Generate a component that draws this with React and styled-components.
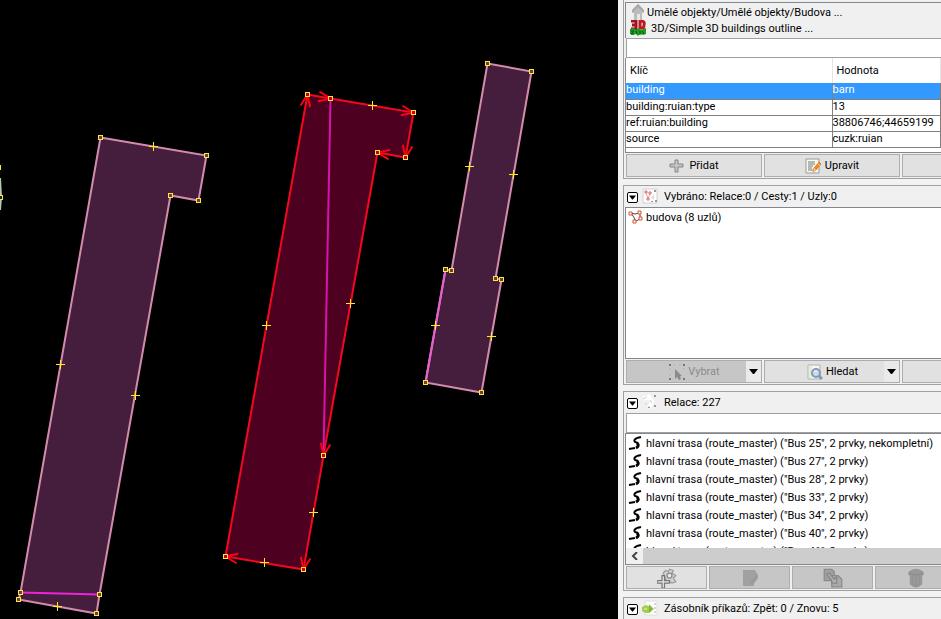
import React from "react";
import styled, { createGlobalStyle, css } from "styled-components";

const GlobalStyle = createGlobalStyle`
  * { box-sizing: border-box; }
  body { margin: 0; background: #f0f0f0; overflow: hidden; }
  body, button, input, table {
    font-family: Roboto, "Liberation Sans", sans-serif;
    font-size: 11px;
    color: #000;
  }
`;

const Page = styled.div`
  display: flex;
  height: 100vh;
  overflow: hidden;
`;

const MapArea = styled.main`
  flex: 1;
  min-width: 0;
  background: #000;
`;

const MapCanvas = styled.svg`
  display: block;
  width: 100%;
  height: 100%;
`;

const Sidebar = styled.aside`
  flex: 0 0 323px;
  display: flex;
  flex-direction: column;
  gap: 6px;
  padding-left: 5px;
  overflow: hidden;
  background: #f2f2f2;
`;

const Panel = styled.section`
  flex: none;
  padding: ${(p) => (p.$first ? "2px 0 0 2px" : "0 0 0 2px")};
  border: 1px solid #a0a0a0;
  border-width: ${(p) => (p.$first ? "0 0 1px 1px" : "1px 0 1px 1px")};
  background: #f0f0f0;
`;

const Boxed = styled.div`
  border: 1px solid #828790;
  border-right: 0;
  margin-left: -1px;
`;

const Presets = styled(Boxed)`
  height: 36px;
  padding: 1px 0 0 4px;
  border-bottom: 0;
`;

const Preset = styled.a`
  display: flex;
  align-items: center;
  gap: ${(p) => p.$gap};
  height: 16px;
  font-size: 11px;
  white-space: nowrap;
  color: #000;
  text-decoration: none;
`;

const Filter = styled.input`
  display: block;
  width: 100%;
  height: 20px;
  padding: 0 4px;
  border: 1px solid #a0a0a0;
  border-right: 0;
  border-radius: 0;
  background: #fff;
  outline: none;
`;

const TableBox = styled(Boxed)`
  height: 95px;
  border-top: 0;
  background: #fff;
  overflow: hidden;
`;

const TagTable = styled.table`
  width: 100%;
  table-layout: fixed;
  border-collapse: collapse;
`;

const KeyColumn = styled.col`
  width: 206px;
`;

const HeadCell = styled.th`
  height: 25px;
  padding: 0 4px;
  text-align: left;
  font-weight: normal;
  border-right: 1px solid #e5e5e5;
`;

const TagRow = styled.tr`
  height: 16px;
  ${(p) =>
    p.$selected &&
    css`
      background: #3399ff;
      color: #fff;
    `}
`;

const TagCell = styled.td`
  height: 16px;
  padding: 0 0 1px 0;
  line-height: 14px;
  white-space: nowrap;
  border-right: 1px solid #808080;
  border-bottom: 1px solid #808080;
`;

const ButtonBar = styled.div`
  display: flex;
  gap: 2px;
  padding: 1px 0;
  overflow: hidden;
`;

const ToolButton = styled.button`
  flex: 0 0 ${(p) => (p.$small ? "81px" : "136px")};
  display: flex;
  align-items: center;
  justify-content: center;
  gap: 4px;
  height: 23px;
  padding: 0;
  border: 1px solid #adadad;
  background: ${(p) => (p.disabled ? "#c6c6c6" : "#e1e1e1")};
  color: ${(p) => (p.disabled ? "#8b8b8b" : "#000")};
`;

const SplitButton = styled.div`
  flex: 0 0 136px;
  display: flex;
  height: 23px;
  border: 1px solid #adadad;
  background: ${(p) => (p.$off ? "#c6c6c6" : "#e1e1e1")};
`;

const SplitMain = styled.button`
  flex: 1;
  display: flex;
  align-items: center;
  justify-content: center;
  gap: 3px;
  padding: 0 0 0 16px;
  border: 0;
  background: transparent;
  color: ${(p) => (p.disabled ? "#8b8b8b" : "#000")};
`;

const SplitArrow = styled.button`
  flex: 0 0 15px;
  display: grid;
  place-items: center;
  padding: 0;
  border: 0;
  background: #eaeaea;
`;

const TitleBar = styled.header`
  display: flex;
  align-items: center;
  height: 21px;
  padding-bottom: 1px;
  background: #f0f0f0;
`;

const Collapse = styled.button`
  display: grid;
  place-items: center;
  width: 11px;
  height: 11px;
  margin: 3px 4px 0 1px;
  padding: 0;
  border: 1px solid #000;
  border-radius: 2px;
  background: #fff;
`;

const Title = styled.h2`
  margin: 0 0 0 6px;
  font-size: 11px;
  font-weight: normal;
  white-space: nowrap;
`;

const List = styled.ul`
  height: ${(p) => p.$height};
  margin: 0;
  padding: 0 0 0 2px;
  list-style: none;
  background: #fff;
  overflow: hidden;
`;

const Item = styled.li`
  display: flex;
  align-items: center;
  gap: 2px;
  height: 18px;
  white-space: nowrap;
`;

const ScrollTrack = styled.div`
  height: 16px;
  background: #cdcdcd;
`;

const ScrollButton = styled.button`
  display: grid;
  place-items: center;
  width: 17px;
  height: 16px;
  padding: 0;
  border: 0;
  background: #f0f0f0;
`;

const Icon = styled.svg.attrs({ viewBox: "0 0 16 16", "aria-hidden": true })`
  flex: none;
  display: block;
  width: ${(p) => (p.$large ? "20px" : "16px")};
  height: ${(p) => (p.$large ? "20px" : "16px")};
`;

const HouseIcon = () => (
  <Icon>
    <path d="M8 0 L3 5 V9 H4 V16 H12 V9 H13 V5 Z" fill="#bcbcbc" />
    <path d="M8 0 L2 6 V9 L8 3 L14 9 V6 Z" fill="#a8a8a8" />
    <path d="M7 10 H10 V16 H7 Z" fill="#e8e8e8" />
  </Icon>
);

const ThreeDIcon = () => (
  <Icon>
    <path d="M1 1 H6 V9 H1 M2 5 H6" fill="none" stroke="#a01420" strokeWidth="3" />
    <path d="M10 1 H12 Q15 2 14 5 Q14 8 12 8 H10 Z" fill="none" stroke="#c01820" strokeWidth="3" />
    <path d="M0 9 L4 8 L6 10 L9 8 L11 10 L16 8 V14 L13 15 L10 14 L8 16 L6 14 L3 15 L0 14 Z" fill="#1d9a25" />
    <path d="M1 11 H4 L1 14 H4 M6 11 L7 14 M10 11 V15 M12 11 L14 14" fill="none" stroke="#075f12" />
  </Icon>
);

const PlusIcon = () => (
  <Icon>
    <path d="M6 2 H9 V6 H14 V9 H9 V14 H6 V9 H1 V6 H6 Z" fill="#c4c4c4" stroke="#858585" />
  </Icon>
);

const EditIcon = () => (
  <Icon>
    <path d="M1 1 H14 V15 H1 Z" fill="#f8f8f2" stroke="#9a9a94" />
    <path d="M3 4 H10 M3 6 H10 M3 8 H8 M3 10 H7 M3 12 H9" stroke="#777" />
    <path d="M14 4 L9 10 L8 14 L11 12 L16 6 Z" fill="#f18a24" stroke="#d56a13" strokeWidth=".7" />
    <path d="M9 10 L8 14 L11 12 Z" fill="#f3d39c" />
    <path d="M12 5 L15 8" stroke="#ffc66d" />
  </Icon>
);

const SelectionIcon = () => (
  <Icon>
    <path d="M1 1 H15 V15 H1 Z" fill="#fff" stroke="#d0d0d0" />
    <path d="M4 4 L6 11 L8 5" fill="none" stroke="#e6a5a2" />
    <path d="M3 3h2v2h-2z M7 4h2v2h-2z M5 10h2v2h-2z" fill="#fff" stroke="#d66b66" />
    <path d="M12 2h2v2h-2z M13 12h2v2h-2z M9 13h2v1h-2z" fill="#999" />
    <path d="M9 10 L12 6 V12 Z" fill="#ddd" />
  </Icon>
);

const AreaIcon = () => (
  <Icon>
    <path d="M3 4 L7 10 L6 13 L12 10 V4 L7 5 Z" fill="#fff" stroke="#444" />
    <path d="M1 3h3v3h-3z M10 2h3v3h-3z M11 8h3v3h-3z M5 11h3v3h-3z" fill="#fff" stroke="#df4c2d" />
  </Icon>
);

const SelectIcon = () => (
  <Icon>
    <path d="M0 0h2v2h-2z M14 0h2v2h-2z M0 14h2v2h-2z M14 14h2v2h-2z" fill="#777" />
    <path d="M4 1 H6 M10 1 H12 M1 4 V6 M1 10 V12 M15 4 V6" stroke="#b0b0b0" />
    <path d="M6 5 V15 L8 13 L10 16 L12 15 L11 12 H13 Z" fill="#8b8b8b" />
  </Icon>
);

const SearchIcon = () => (
  <Icon>
    <path d="M1 1 H13 V15 H1 Z" fill="#f6f6f2" stroke="#aeb5aa" />
    <path d="M2 2 H5 V14 H2 Z" fill="#dcefd7" />
    <circle cx="9" cy="9" r="4" fill="#c8daef" stroke="#8799b0" strokeWidth="2" />
    <path d="M12 12 L15 15" stroke="#8799b0" strokeWidth="3" />
    <path d="M7 8 Q8 6 10 7" fill="none" stroke="#fff" />
  </Icon>
);

const RelationsIcon = () => (
  <Icon>
    <path d="M1 5 L7 3 L10 8 L7 14" fill="none" stroke="#fff" strokeWidth="4" />
    <path d="M1 5 L5 3 M8 6 L10 9 M4 9 V11 M7 12 V14" stroke="#ccc" />
    <path d="M12 1h2v2h-2z M12 11h2v2h-2z M6 13h2v1h-2z" fill="#999" />
  </Icon>
);

const RouteIcon = () => (
  <Icon>
    <path d="M13 2 L9 3" stroke="#000" strokeWidth="2" />
    <path d="M9 3 Q5 5 7 7 L10 8" fill="none" stroke="#000" strokeWidth="2" />
    <path d="M9 8 Q12 11 8 13" fill="none" stroke="#000" strokeWidth="3" />
    <path d="M7 13 L1 14" stroke="#000" strokeWidth="2" />
  </Icon>
);

const AddRelationIcon = () => (
  <Icon $large>
    <path d="M5 4 L7 2 L9 3 L10 1 L13 2 L12 4 L15 6 L13 8 L15 11 L12 12 L10 11 L8 12 Z" fill="#d2d2d2" stroke="#9a9a9a" />
    <circle cx="10" cy="6" r="2" fill="#e8e8e8" stroke="#888" />
    <path d="M4 6h2v4h4v2h-4v4h-2v-4h-4v-2h4z" fill="#e8e8e8" stroke="#777" />
  </Icon>
);

const NoteIcon = () => (
  <Icon>
    <path d="M1 0 H13 L16 5 V8 L12 14 V16 H1 Z" fill="#a0a0a0" />
    <path d="M9 13 L15 6" stroke="#999" strokeWidth="2" />
  </Icon>
);

const CopyIcon = () => (
  <Icon $large>
    <path d="M1 1 H7 L9 3 V10 H1 Z" fill="#a0a0a0" stroke="#8a8a8a" />
    <path d="M7 6 H12 L15 9 V15 H7 Z" fill="#aaa" stroke="#8a8a8a" />
    <path d="M3 5 L7 10 V12 H11 V7 L9 9 L5 4 Z" fill="#b2b2b2" stroke="#868686" />
  </Icon>
);

const TrashIcon = () => (
  <Icon $large>
    <path d="M2 3 Q8 -2 14 3 V6 H13 V13 Q8 18 3 13 V6 H2 Z" fill="#999" />
    <path d="M2 4 Q8 7 14 4" fill="none" stroke="#8b8b8b" />
    <path d="M5 7 V14 M8 7 V15 M11 7 V14" stroke="#929292" />
  </Icon>
);

const StackIcon = () => (
  <Icon>
    <path d="M3 1 H15 V15 H3 Z" fill="#fff" stroke="#ddd" />
    <path d="M0 7 L4 5 L7 6 V4 L12 9 L7 13 H3 L0 11 Z" fill="#a4cc55" />
    <path d="M7 5 L11 9 L7 13 Z" fill="#7ab93c" />
    <path d="M2 8 H5 V10 H2 Z" fill="#d9dc58" />
    <path d="M13 3 V5 M13 7 V9 M13 11 V13" stroke="#aaa" />
  </Icon>
);

const DownArrow = ({ size = 9 }) => (
  <svg width={size} height={size} viewBox="0 0 9 9" aria-hidden="true">
    <path d="M0 2 H9 L5 7 H4 Z" fill="#000" />
  </svg>
);

const LeftArrow = () => (
  <svg width="8" height="8" viewBox="0 0 8 8" aria-hidden="true">
    <path d="M6 0 L2 4 L6 8" fill="none" stroke="#444" strokeWidth="2" />
  </svg>
);

const buildings = [
  {
    nodes: [[100, 137], [206, 155], [198, 200], [170, 195], [99, 594], [96, 613], [18, 599], [20, 592]],
    middles: [[153, 146], [60, 364], [135, 395], [57, 606]],
    inner: [[20, 592], [99, 594]],
  },
  {
    selected: true,
    nodes: [[307, 94], [330, 98], [413, 112], [405, 157], [377, 152], [323, 455], [303, 569], [225, 556]],
    middles: [[372, 105], [350, 303], [266, 325], [313, 512], [264, 562]],
    inner: [[330, 98], [323, 455]],
  },
  {
    nodes: [[487, 63], [531, 71], [495, 278], [501, 279], [481, 392], [425, 382], [445, 269], [451, 270]],
    middles: [[469, 166], [513, 174], [435, 325], [491, 336]],
    accent: [[425, 382], [445, 269]],
  },
];

const toPoints = (list) => list.map((p) => p.join(",")).join(" ");

function arrowHead([fromX, fromY], [x, y]) {
  const angle = Math.atan2(fromY - y, fromX - x);
  const arm = (turn) => `${x + 13 * Math.cos(angle + turn)} ${y + 13 * Math.sin(angle + turn)}`;
  return `M${arm(0.38)} L${x} ${y} L${arm(-0.38)}`;
}

const MapNode = ({ x, y, fill }) => (
  <>
    <rect x={x - 2} y={y - 2} width="5" height="5" fill="#ffe83c" />
    <rect x={x - 1} y={y - 1} width="3" height="3" fill={fill} />
  </>
);

const MiddleMark = ({ x, y }) => (
  <path d={`M${x - 4} ${y}h4v-4h1v4h4v1h-4v4h-1v-4h-4z`} fill="#ffea20" />
);

function Building({ nodes, middles, inner, accent, selected }) {
  const line = selected ? "#f40820" : "#d48bac";
  return (
    <g>
      <g transform="translate(.5 .5)" fill="none" strokeWidth="2">
        <polygon points={toPoints(nodes)} fill={selected ? "#4d001f" : "#461e3d"} stroke={line} />
        {inner && <polyline points={toPoints(inner)} stroke={selected ? "#d812b0" : "#ee22dd"} />}
        {accent && <polyline points={toPoints(accent)} stroke="#e65fce" />}
        {selected &&
          nodes.map((node, i) => (
            <path key={i} d={arrowHead(nodes[(i + nodes.length - 1) % nodes.length], node)} stroke="#ff0010" />
          ))}
      </g>
      {nodes.map(([x, y]) => (
        <MapNode key={`${x}-${y}`} x={x} y={y} fill={selected ? "#c30010" : "#6b4140"} />
      ))}
      {middles.map(([x, y]) => (
        <MiddleMark key={`${x}-${y}`} x={x} y={y} />
      ))}
    </g>
  );
}

const tags = [
  ["building", "barn"],
  ["building:ruian:type", "13"],
  ["ref:ruian:building", "38806746;44659199"],
  ["source", "cuzk:ruian"],
];

const routes = [
  ["25", ", nekompletní"],
  ["27", ""],
  ["28", ""],
  ["33", ""],
  ["34", ""],
  ["40", ""],
  ["41", ""],
];

function PanelTitle({ icon, children }) {
  return (
    <TitleBar>
      <Collapse aria-label="Sbalit panel">
        <DownArrow size={7} />
      </Collapse>
      {icon}
      <Title>{children}</Title>
    </TitleBar>
  );
}

export default function App() {
  return (
    <>
      <GlobalStyle />
      <Page>
        <MapArea>
          <MapCanvas role="img" aria-label="Mapa budov">
            <path d="M0 178 L1 197 L0 210" fill="none" stroke="#b5c9b0" strokeWidth="2" />
            <MapNode x={-2} y={167} fill="#222" />
            <MapNode x={0} y={197} fill="#222" />
            {buildings.map((b, i) => (
              <Building key={i} {...b} />
            ))}
          </MapCanvas>
        </MapArea>
        <Sidebar>
          <Panel $first>
            <Presets>
              <Preset href="#budova" $gap="1px">
                <HouseIcon />
                Umělé objekty/Umělé objekty/Budova ...
              </Preset>
              <Preset href="#obrys" $gap="5px">
                <ThreeDIcon />
                3D/Simple 3D buildings outline ...
              </Preset>
            </Presets>
            <Filter aria-label="Filtr značek" />
            <TableBox>
              <TagTable>
                <colgroup>
                  <KeyColumn />
                  <col />
                </colgroup>
                <thead>
                  <tr>
                    <HeadCell>Klíč</HeadCell>
                    <HeadCell>Hodnota</HeadCell>
                  </tr>
                </thead>
                <tbody>
                  {tags.map(([key, value], i) => (
                    <TagRow key={key} $selected={i === 0}>
                      <TagCell>{key}</TagCell>
                      <TagCell>{value}</TagCell>
                    </TagRow>
                  ))}
                </tbody>
              </TagTable>
            </TableBox>
            <ButtonBar>
              <ToolButton><PlusIcon />Přidat</ToolButton>
              <ToolButton><EditIcon />Upravit</ToolButton>
              <ToolButton aria-label="Smazat" />
            </ButtonBar>
          </Panel>

          <Panel>
            <PanelTitle icon={<SelectionIcon />}>Vybráno: Relace:0 / Cesty:1 / Uzly:0</PanelTitle>
            <Boxed>
              <List $height="150px">
                <Item><AreaIcon />budova (8 uzlů)</Item>
              </List>
            </Boxed>
            <ButtonBar>
              <SplitButton $off>
                <SplitMain disabled><SelectIcon />Vybrat</SplitMain>
                <SplitArrow aria-label="Možnosti výběru"><DownArrow /></SplitArrow>
              </SplitButton>
              <SplitButton>
                <SplitMain><SearchIcon />Hledat</SplitMain>
                <SplitArrow aria-label="Historie hledání"><DownArrow /></SplitArrow>
              </SplitButton>
              <ToolButton aria-label="Další" />
            </ButtonBar>
          </Panel>

          <Panel>
            <PanelTitle icon={<RelationsIcon />}>Relace: 227</PanelTitle>
            <Filter aria-label="Filtr relací" />
            <Boxed>
              <List $height="114px">
                {routes.map(([number, suffix]) => (
                  <Item key={number}>
                    <RouteIcon />
                    {`hlavní trasa (route_master) ("Bus ${number}", 2 prvky${suffix})`}
                  </Item>
                ))}
              </List>
              <ScrollTrack>
                <ScrollButton aria-label="Posunout vlevo"><LeftArrow /></ScrollButton>
              </ScrollTrack>
            </Boxed>
            <ButtonBar>
              <ToolButton $small aria-label="Nová relace"><AddRelationIcon /></ToolButton>
              <ToolButton $small disabled aria-label="Upravit relaci"><NoteIcon /></ToolButton>
              <ToolButton $small disabled aria-label="Kopírovat relaci"><CopyIcon /></ToolButton>
              <ToolButton $small disabled aria-label="Smazat relaci"><TrashIcon /></ToolButton>
            </ButtonBar>
          </Panel>

          <Panel>
            <PanelTitle icon={<StackIcon />}>Zásobník příkazů: Zpět: 0 / Znovu: 5</PanelTitle>
          </Panel>
        </Sidebar>
      </Page>
    </>
  );
}
